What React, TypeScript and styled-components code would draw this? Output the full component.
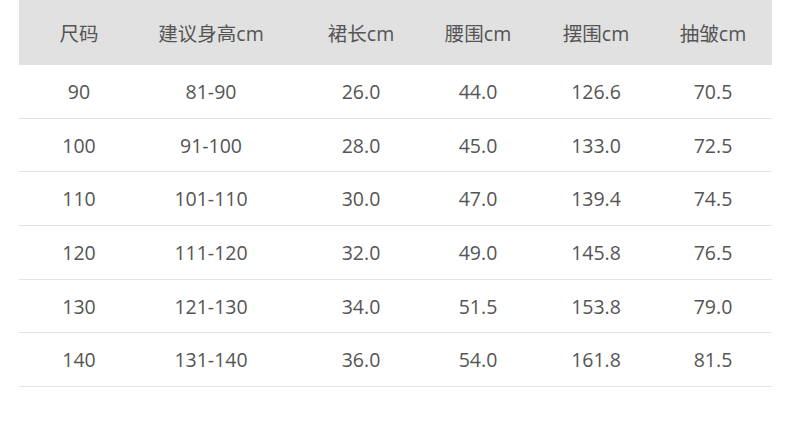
import styled, { createGlobalStyle } from "styled-components";

const GlobalStyle = createGlobalStyle`
  body {
    margin: 0;
    background: #ffffff;
    font-family: "Open Sans", "Noto Sans CJK SC", sans-serif;
  }
`;

const headers = ["尺码", "建议身高cm", "裙长cm", "腰围cm", "摆围cm", "抽皱cm"];

const rows = [
  ["90", "81-90", "26.0", "44.0", "126.6", "70.5"],
  ["100", "91-100", "28.0", "45.0", "133.0", "72.5"],
  ["110", "101-110", "30.0", "47.0", "139.4", "74.5"],
  ["120", "111-120", "32.0", "49.0", "145.8", "76.5"],
  ["130", "121-130", "34.0", "51.5", "153.8", "79.0"],
  ["140", "131-140", "36.0", "54.0", "161.8", "81.5"],
];

const App = () => {
  return (
    <>
      <GlobalStyle />
      <Page>
        <Table>
          <HeaderRow>
            {headers.map((h) => (
              <Cell key={h}>{h}</Cell>
            ))}
          </HeaderRow>
          {rows.map((row) => (
            <Row key={row[0]}>
              {row.map((v, i) => (
                <Cell key={i}>{v}</Cell>
              ))}
            </Row>
          ))}
        </Table>
      </Page>
    </>
  );
};

export default App;

const Page = styled.div`
  width: 790px;
  height: 431px;
  padding-left: 19px;
  box-sizing: border-box;
`;

const Table = styled.div`
  width: 753px;
  display: flex;
  flex-direction: column;
`;

const HeaderRow = styled.div`
  display: grid;
  grid-template-columns: 120px 144px 156px 78px 158px 1fr;
  height: 65px;
  background: #e1e1e1;
  align-items: center;
`;

const Row = styled.div`
  display: grid;
  grid-template-columns: 120px 144px 156px 78px 158px 1fr;
  height: 52.7px;
  border-bottom: 1px solid #e4e4e4;
  align-items: center;
`;

const Cell = styled.div`
  text-align: center;
  white-space: nowrap;
  font-size: 19.5px;
  color: #555555;

  &:last-child {
    padding-right: 21px;
  }
`;
